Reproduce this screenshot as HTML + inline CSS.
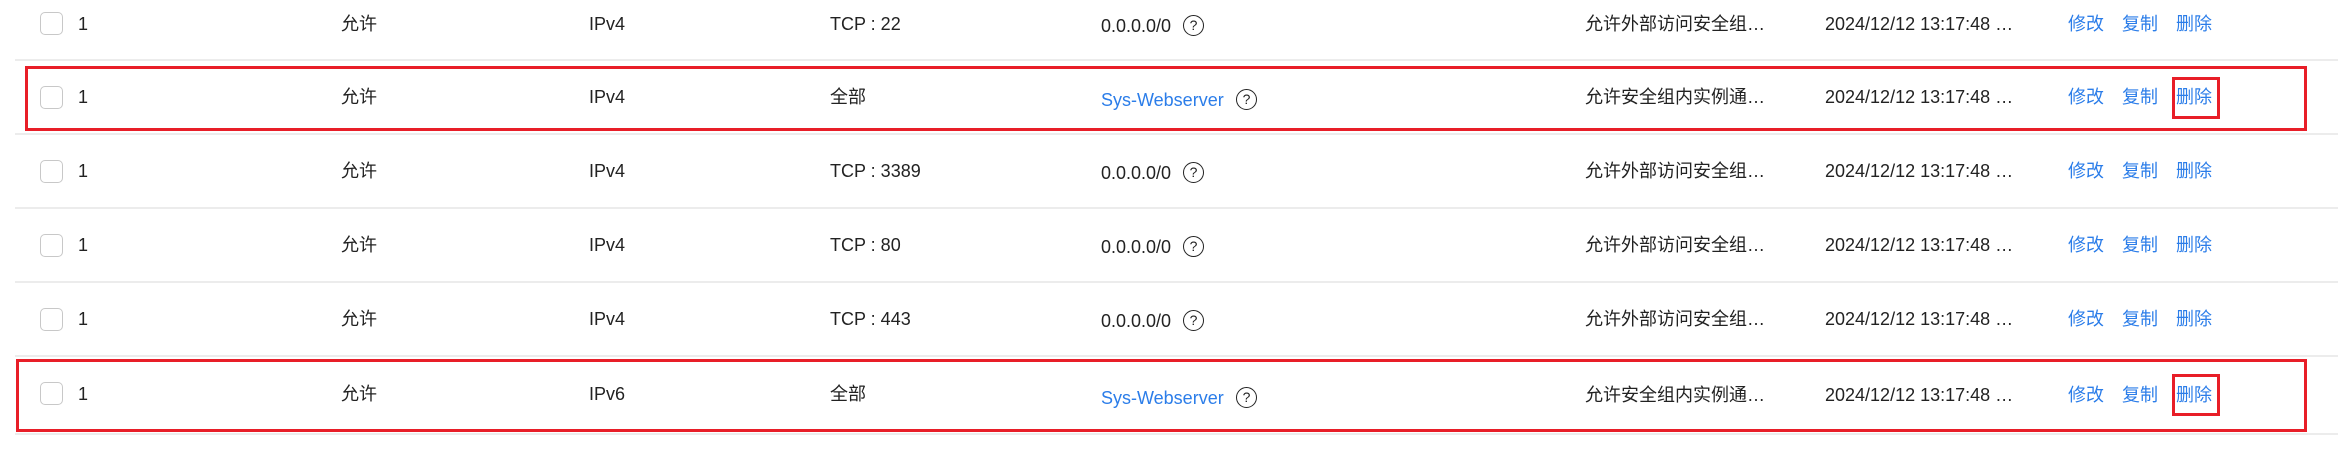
<!DOCTYPE html>
<html><head><meta charset="utf-8"><style>
body{margin:0;width:2338px;height:454px;background:#fff;position:relative;overflow:hidden;font-family:"Liberation Sans","Noto Sans CJK SC",sans-serif;font-size:18px;color:#222;}
.t{position:absolute;white-space:nowrap;line-height:22px;}
.b{color:#2b7de9;}
.div{position:absolute;left:15px;right:0;height:2px;background:#ececec;}
.cb{position:absolute;left:40px;width:21px;height:21px;border:1.5px solid #c8c8c8;border-radius:5px;background:#fff;}
.q{position:absolute;width:19px;height:19px;border:1.6px solid #222;border-radius:50%;font-size:14px;text-align:center;line-height:19px;}
.red{position:absolute;border:3px solid #e81e28;}
</style></head><body>
<div class="div" style="top:59px"></div>
<div class="div" style="top:133px"></div>
<div class="div" style="top:207px"></div>
<div class="div" style="top:281px"></div>
<div class="div" style="top:355px"></div>
<div class="div" style="top:433px"></div>

<div class="cb" style="top:12px"></div>
<div class="t" style="left:78px;top:13px">1</div>
<div class="t" style="left:341px;top:13px">允许</div>
<div class="t" style="left:589px;top:13px">IPv4</div>
<div class="t" style="left:830px;top:13px">TCP : 22</div>
<div class="t" style="left:1101px;top:15px">0.0.0.0/0</div>
<div class="q" style="left:1183px;top:15px">?</div>
<div class="t" style="left:1585px;top:13px">允许外部访问安全组…</div>
<div class="t" style="left:1825px;top:13px">2024/12/12 13:17:48 …</div>
<div class="t b" style="left:2068px;top:13px">修改</div>
<div class="t b" style="left:2122px;top:13px">复制</div>
<div class="t b" style="left:2176px;top:13px">删除</div>

<div class="cb" style="top:86px"></div>
<div class="t" style="left:78px;top:86px">1</div>
<div class="t" style="left:341px;top:86px">允许</div>
<div class="t" style="left:589px;top:86px">IPv4</div>
<div class="t" style="left:830px;top:86px">全部</div>
<div class="t b" style="left:1101px;top:89px">Sys-Webserver</div>
<div class="q" style="left:1236px;top:89px">?</div>
<div class="t" style="left:1585px;top:86px">允许安全组内实例通…</div>
<div class="t" style="left:1825px;top:86px">2024/12/12 13:17:48 …</div>
<div class="t b" style="left:2068px;top:86px">修改</div>
<div class="t b" style="left:2122px;top:86px">复制</div>
<div class="t b" style="left:2176px;top:86px">删除</div>
<div class="red" style="left:25px;top:66px;width:2276px;height:59px"></div>
<div class="red" style="left:2172px;top:77px;width:42px;height:36px"></div>

<div class="cb" style="top:160px"></div>
<div class="t" style="left:78px;top:160px">1</div>
<div class="t" style="left:341px;top:160px">允许</div>
<div class="t" style="left:589px;top:160px">IPv4</div>
<div class="t" style="left:830px;top:160px">TCP : 3389</div>
<div class="t" style="left:1101px;top:162px">0.0.0.0/0</div>
<div class="q" style="left:1183px;top:162px">?</div>
<div class="t" style="left:1585px;top:160px">允许外部访问安全组…</div>
<div class="t" style="left:1825px;top:160px">2024/12/12 13:17:48 …</div>
<div class="t b" style="left:2068px;top:160px">修改</div>
<div class="t b" style="left:2122px;top:160px">复制</div>
<div class="t b" style="left:2176px;top:160px">删除</div>

<div class="cb" style="top:234px"></div>
<div class="t" style="left:78px;top:234px">1</div>
<div class="t" style="left:341px;top:234px">允许</div>
<div class="t" style="left:589px;top:234px">IPv4</div>
<div class="t" style="left:830px;top:234px">TCP : 80</div>
<div class="t" style="left:1101px;top:236px">0.0.0.0/0</div>
<div class="q" style="left:1183px;top:236px">?</div>
<div class="t" style="left:1585px;top:234px">允许外部访问安全组…</div>
<div class="t" style="left:1825px;top:234px">2024/12/12 13:17:48 …</div>
<div class="t b" style="left:2068px;top:234px">修改</div>
<div class="t b" style="left:2122px;top:234px">复制</div>
<div class="t b" style="left:2176px;top:234px">删除</div>

<div class="cb" style="top:308px"></div>
<div class="t" style="left:78px;top:308px">1</div>
<div class="t" style="left:341px;top:308px">允许</div>
<div class="t" style="left:589px;top:308px">IPv4</div>
<div class="t" style="left:830px;top:308px">TCP : 443</div>
<div class="t" style="left:1101px;top:310px">0.0.0.0/0</div>
<div class="q" style="left:1183px;top:310px">?</div>
<div class="t" style="left:1585px;top:308px">允许外部访问安全组…</div>
<div class="t" style="left:1825px;top:308px">2024/12/12 13:17:48 …</div>
<div class="t b" style="left:2068px;top:308px">修改</div>
<div class="t b" style="left:2122px;top:308px">复制</div>
<div class="t b" style="left:2176px;top:308px">删除</div>

<div class="cb" style="top:382px"></div>
<div class="t" style="left:78px;top:383px">1</div>
<div class="t" style="left:341px;top:383px">允许</div>
<div class="t" style="left:589px;top:383px">IPv6</div>
<div class="t" style="left:830px;top:383px">全部</div>
<div class="t b" style="left:1101px;top:387px">Sys-Webserver</div>
<div class="q" style="left:1236px;top:387px">?</div>
<div class="t" style="left:1585px;top:384px">允许安全组内实例通…</div>
<div class="t" style="left:1825px;top:384px">2024/12/12 13:17:48 …</div>
<div class="t b" style="left:2068px;top:384px">修改</div>
<div class="t b" style="left:2122px;top:384px">复制</div>
<div class="t b" style="left:2176px;top:384px">删除</div>
<div class="red" style="left:16px;top:359px;width:2285px;height:67px"></div>
<div class="red" style="left:2172px;top:374px;width:42px;height:36px"></div>
</body></html>
